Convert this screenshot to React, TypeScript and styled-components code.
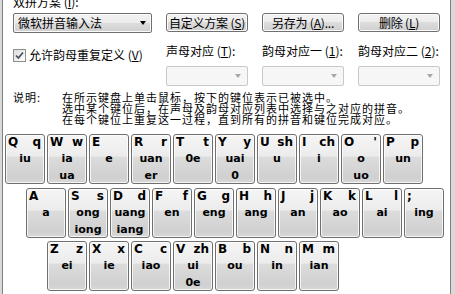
import React from 'react';
import styled, { createGlobalStyle } from 'styled-components';

const GlobalStyle = createGlobalStyle`
  html, body {
    margin: 0;
    padding: 0;
    background: #d9d9d9;
  }
  body {
    font-family: "Noto Sans CJK SC", "Liberation Sans", sans-serif;
    font-size: 12px;
    color: #000;
  }
`;

const Window = styled.div`
  box-sizing: border-box;
  width: 449px;
  height: 294px;
  margin-left: 2px;
  background: #fff;
  border-left: 1px solid #7f7f7f;
  border-right: 1px solid #7f7f7f;
  overflow: hidden;
`;

const Caption = styled.div`
  line-height: 14px;
  margin: -5px 0 0 10px;
  white-space: nowrap;
`;

const Form = styled.div`
  display: grid;
  grid-template-columns: 139px 82px 82px 82px;
  column-gap: 14px;
  align-items: start;
  padding-left: 10px;
  margin-top: 4px;
`;

const winGradient = `linear-gradient(#f3f3f3 0%, #ebebeb 48%, #dddddd 50%, #cfcfcf 100%)`;

const Combo = styled.div`
  box-sizing: border-box;
  height: 20px;
  border: 1px solid #707070;
  border-radius: 2px;
  background: ${winGradient};
  box-shadow: inset 0 0 0 1px #fbfbfb;
  display: flex;
  align-items: center;
  justify-content: space-between;
  padding: 0 5px 0 4px;
  line-height: 18px;
  white-space: nowrap;
`;

const Arrow = styled.span<{ $color: string }>`
  width: 0;
  height: 0;
  border-left: 3.5px solid transparent;
  border-right: 3.5px solid transparent;
  border-top: 4px solid ${p => p.$color};
`;

const Button = styled.div`
  box-sizing: border-box;
  height: 19px;
  border: 1px solid #707070;
  border-radius: 3px;
  background: ${winGradient};
  box-shadow: inset 0 0 0 1px #fbfbfb;
  display: flex;
  align-items: center;
  justify-content: center;
  line-height: 17px;
  white-space: nowrap;
  letter-spacing: -0.2px;
`;

const CheckRow = styled.label`
  display: flex;
  align-items: center;
  gap: 3px;
  margin-top: 15px;
  white-space: nowrap;
  line-height: 14px;
`;

const Box = styled.span`
  box-sizing: border-box;
  width: 13px;
  height: 13px;
  border: 1px solid #8e8f8f;
  background: linear-gradient(135deg, #dcdcdc, #ffffff);
  display: flex;
  align-items: center;
  justify-content: center;
`;

const FieldLabel = styled.div`
  margin-top: 10px;
  line-height: 16px;
  white-space: nowrap;
`;

const DisabledCombo = styled.div<{ $col: number }>`
  box-sizing: border-box;
  grid-column: ${p => p.$col};
  height: 20px;
  margin-top: 4px;
  border: 1px solid #c9c9c9;
  border-radius: 2px;
  background: #f6f6f6;
  display: flex;
  align-items: center;
  justify-content: flex-end;
  padding-right: 6px;
`;

const Help = styled.div`
  display: grid;
  grid-template-columns: 49px 1fr;
  padding-left: 10px;
  margin-top: 6px;
  font-size: 11px;
  letter-spacing: 1px;
  line-height: 11px;
  white-space: nowrap;
`;

const Keyboard = styled.div`
  display: flex;
  flex-direction: column;
  gap: 3.5px;
  margin-top: 9px;
`;

const KeyRow = styled.div<{ $indent: number }>`
  display: flex;
  gap: 2px;
  padding-left: ${p => p.$indent}px;
`;

const Key = styled.div`
  box-sizing: border-box;
  width: 40px;
  height: 50px;
  border: 1px solid #6f6f6f;
  border-radius: 3px;
  background: linear-gradient(#f5f5f5 0%, #ececec 44%, #dcdcdc 46%, #d0d0d0 88%, #d8d8d8 100%);
  box-shadow: inset 0 0 0 1px rgba(255, 255, 255, 0.75);
  font-family: "DejaVu Sans", "Liberation Sans", sans-serif;
  font-weight: bold;
  overflow: hidden;
`;

const KeyTop = styled.div`
  display: flex;
  justify-content: space-between;
  padding: 0 3px 0 2px;
  font-size: 12px;
  line-height: 15px;
`;

const Final = styled.div`
  text-align: center;
  font-size: 11px;
  line-height: 17px;
`;

type KeyDef = [string, string, string[]];

const rows: { indent: number; keys: KeyDef[] }[] = [
  {
    indent: 2,
    keys: [
      ['Q', 'q', ['iu']],
      ['W', 'w', ['ia', 'ua']],
      ['E', '', ['e']],
      ['R', 'r', ['uan', 'er']],
      ['T', 't', ['0e']],
      ['Y', 'y', ['uai', '0']],
      ['U', 'sh', ['u']],
      ['I', 'ch', ['i']],
      ['O', "'", ['o', 'uo']],
      ['P', 'p', ['un']],
    ],
  },
  {
    indent: 23,
    keys: [
      ['A', '', ['a']],
      ['S', 's', ['ong', 'iong']],
      ['D', 'd', ['uang', 'iang']],
      ['F', 'f', ['en']],
      ['G', 'g', ['eng']],
      ['H', 'h', ['ang']],
      ['J', 'j', ['an']],
      ['K', 'k', ['ao']],
      ['L', 'l', ['ai']],
      [';', '', ['ing']],
    ],
  },
  {
    indent: 44,
    keys: [
      ['Z', 'z', ['ei']],
      ['X', 'x', ['ie']],
      ['C', 'c', ['iao']],
      ['V', 'zh', ['ui', '0e']],
      ['B', 'b', ['ou']],
      ['N', 'n', ['in']],
      ['M', 'm', ['ian']],
    ],
  },
];

export default function App() {
  return (
    <>
      <GlobalStyle />
      <Window>
        <Caption>双拼方案 (<u>I</u>):</Caption>
        <Form>
          <Combo>
            <span>微软拼音输入法</span>
            <Arrow $color="#000" />
          </Combo>
          <Button>自定义方案 (<u>S</u>)</Button>
          <Button>另存为 (<u>A</u>)...</Button>
          <Button>删除 (<u>L</u>)</Button>

          <CheckRow>
            <Box>
              <svg width="9" height="9" viewBox="0 0 9 9">
                <path d="M1 4.5 L3.4 7 L8 1.5" fill="none" stroke="#4a4f57" strokeWidth="1.7" />
              </svg>
            </Box>
            <span>允许韵母重复定义 (<u>V</u>)</span>
          </CheckRow>
          <FieldLabel>声母对应 (<u>T</u>):</FieldLabel>
          <FieldLabel>韵母对应一 (<u>1</u>):</FieldLabel>
          <FieldLabel>韵母对应二 (<u>2</u>):</FieldLabel>

          <DisabledCombo $col={2}><Arrow $color="#a6a6a6" /></DisabledCombo>
          <DisabledCombo $col={3}><Arrow $color="#a6a6a6" /></DisabledCombo>
          <DisabledCombo $col={4}><Arrow $color="#a6a6a6" /></DisabledCombo>
        </Form>

        <Help>
          <div>说明:</div>
          <div>
            <div>在所示键盘上单击鼠标，按下的键位表示已被选中。</div>
            <div>选中某个键位后，在声母及韵母对应列表中选择与之对应的拼音。</div>
            <div>在每个键位上重复这一过程，直到所有的拼音和键位完成对应。</div>
          </div>
        </Help>

        <Keyboard>
          {rows.map((row, i) => (
            <KeyRow key={i} $indent={row.indent}>
              {row.keys.map(([up, initial, finals]) => (
                <Key key={up}>
                  <KeyTop>
                    <span>{up}</span>
                    <span>{initial}</span>
                  </KeyTop>
                  {finals.map(f => (
                    <Final key={f}>{f}</Final>
                  ))}
                </Key>
              ))}
            </KeyRow>
          ))}
        </Keyboard>
      </Window>
    </>
  );
}
